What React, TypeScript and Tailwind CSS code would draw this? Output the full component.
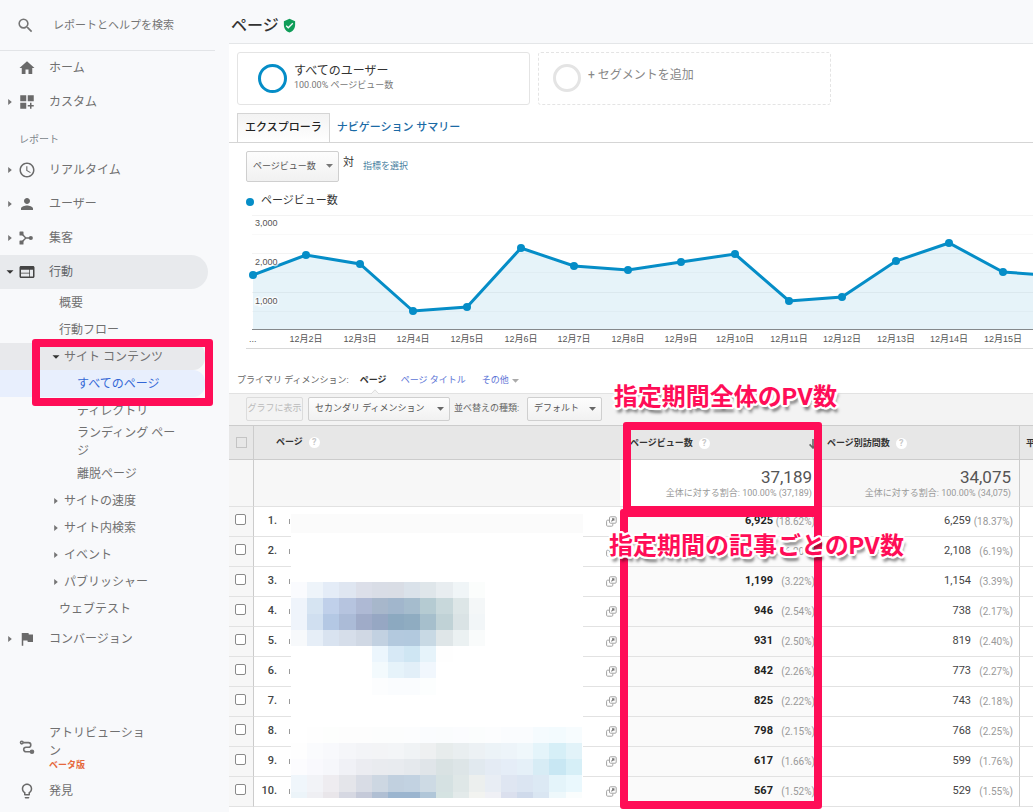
import React from "react";
import {
  MdSearch,
  MdHome,
  MdDashboardCustomize,
  MdAccessTime,
  MdPerson,
  MdWeb,
  MdFlag,
  MdLightbulbOutline,
  MdVerifiedUser,
} from "react-icons/md";

function AcquisitionIcon() {
  return (
    <svg viewBox="0 0 16 16" className="ml-px size-4" fill="currentColor">
      <rect x="0.5" y="1.5" width="4" height="4" rx="0.6" />
      <rect x="0.5" y="10.5" width="4" height="4" rx="0.6" />
      <circle cx="11.8" cy="8" r="2.1" />
      <path d="M2.5 3.5L6.8 8l-4.3 4.5M6.8 8h5" fill="none" stroke="currentColor" strokeWidth="1.4" />
    </svg>
  );
}

function AttributionIcon() {
  return (
    <svg viewBox="0 0 16 16" className="size-4" fill="none" stroke="currentColor" strokeWidth="1.6">
      <circle cx="2.8" cy="3.6" r="1.3" />
      <path d="M4.2 3.6h5.3a2.2 2.2 0 0 1 0 4.6H7a2.3 2.3 0 0 0 0 4.6h5" />
      <circle cx="13" cy="12.8" r="1.5" fill="currentColor" />
    </svg>
  );
}

function OpenIcon() {
  return (
    <svg viewBox="0 0 11 11" className="size-[11px]" fill="none" stroke="#a3a3a3" strokeWidth="1">
      <rect x="3.5" y="0.8" width="6.7" height="6.4" rx="1" />
      <path d="M3.2 4.2H1.6a1 1 0 0 0-1 1v4a1 1 0 0 0 1 1h4.2a1 1 0 0 0 1-1V7.6" />
      <path d="M5.4 5.4l2-2M6 2.9h1.9v1.9" stroke="#777" strokeWidth="1.1" />
    </svg>
  );
}

function Caret({ open = false }: { open?: boolean }) {
  return (
    <svg viewBox="0 0 8 8" className="size-2 shrink-0" fill={open ? "#333" : "#757575"}>
      <path d={open ? "M0.5 2.2h7L4 5.8z" : "M2.2 1v6L5.8 4z"} />
    </svg>
  );
}

function Down({ className = "" }: { className?: string }) {
  return (
    <svg viewBox="0 0 7 4" className={`h-1 w-[7px] ${className}`} fill="currentColor">
      <path d="M0 0h7L3.5 3.8z" />
    </svg>
  );
}

function Help() {
  return (
    <span className="inline-flex size-[11px] items-center justify-center rounded-full bg-white text-[9px] leading-none font-bold text-[#c8c8c8]">
      ?
    </span>
  );
}

function NavItem({
  icon,
  label,
  caret,
  active = false,
}: {
  icon: React.ReactNode;
  label: string;
  caret?: "open" | "closed";
  active?: boolean;
}) {
  return (
    <a
      href="#"
      className={`mr-[21px] flex h-[34px] items-center rounded-r-full pl-[6px] ${active ? "bg-[#e8eaed] text-[#5f6368]" : ""}`}
    >
      <span className="flex w-3">{caret && <Caret open={caret === "open"} />}</span>
      <span className="flex w-[31px] text-[18px] text-[#6a6a6a]">{icon}</span>
      {label}
    </a>
  );
}

function SubItem({ label, caret }: { label: string; caret?: boolean }) {
  return (
    <a href="#" className={`flex h-[27px] items-center ${caret ? "gap-1 pl-[52px]" : "pl-[59px]"}`}>
      {caret && <Caret />}
      {label}
    </a>
  );
}

function Sidebar() {
  return (
    <nav className="flex w-[229px] shrink-0 flex-col bg-[#f8f9fb] pb-1 text-[12px] text-[#707070]">
      <label className="mr-[14px] flex h-[51px] items-center border-b border-[#e2e4e7] pl-4">
        <MdSearch className="size-[19px] text-[#757575]" />
        <input
          type="search"
          aria-label="レポートとヘルプを検索"
          placeholder="レポートとヘルプを検索"
          className="ml-[18px] w-[140px] bg-transparent pt-[2px] text-[11px] outline-none placeholder:text-[#757575]"
        />
      </label>
      <NavItem icon={<MdHome />} label="ホーム" />
      <NavItem icon={<MdDashboardCustomize />} label="カスタム" caret="closed" />
      <h2 className="flex h-[34px] items-center pt-[6px] pl-[19px] text-[10px] text-[#80868b]">レポート</h2>
      <NavItem icon={<MdAccessTime />} label="リアルタイム" caret="closed" />
      <NavItem icon={<MdPerson />} label="ユーザー" caret="closed" />
      <NavItem icon={<AcquisitionIcon />} label="集客" caret="closed" />
      <NavItem icon={<MdWeb className="text-[#444]" />} label="行動" caret="open" active />
      <SubItem label="概要" />
      <SubItem label="行動フロー" />
      <div className="relative">
        <a href="#" className="mr-[24px] flex h-[27px] items-center gap-1 rounded-r-xl bg-[#e8e9ec] pl-[52px]">
          <Caret open />
          サイト コンテンツ
        </a>
        <a href="#" className="mr-[24px] flex h-[27px] items-center rounded-r-xl bg-[#e8effd] pl-[77px] text-[#3367d6]">
          すべてのページ
        </a>
        <div className="pointer-events-none absolute -top-1 left-8 h-[67px] w-[181px] rounded-[3px] border-8 border-[#ff0d57]" />
      </div>
      <a href="#" className="flex h-[27px] items-center pl-[77px]">
        ディレクトリ
      </a>
      <a href="#" className="ml-[77px] w-[104px] leading-[18px]">
        ランディング ページ
      </a>
      <a href="#" className="flex h-[27px] items-center pl-[77px]">
        離脱ページ
      </a>
      <SubItem label="サイトの速度" caret />
      <SubItem label="サイト内検索" caret />
      <SubItem label="イベント" caret />
      <SubItem label="パブリッシャー" caret />
      <SubItem label="ウェブテスト" />
      <NavItem icon={<MdFlag />} label="コンバージョン" caret="closed" />
      <a href="#" className="mt-auto mb-1 flex items-center pl-[19px]">
        <span className="w-[30px]">
          <AttributionIcon />
        </span>
        <span className="w-[100px] leading-[18px]">
          アトリビューション
          <span className="block text-[9px] leading-[10px] font-bold text-[#e5683c]">ベータ版</span>
        </span>
      </a>
      <NavItem icon={<MdLightbulbOutline />} label="発見" />
    </nav>
  );
}

const values: number[] = [60, 40, 49, 96, 92, 33, 51, 55, 47, 39, 86, 82, 46, 28, 57, 61, 52];
const xOf = (i: number) => Math.round(6.5 + i * 53.6);

function Chart() {
  const line = values.map((y, i) => `${xOf(i)},${y}`).join(" ");
  return (
    <svg className="h-[134px] w-full border-b border-[#d8d8d8]" role="img" aria-label="ページビュー数">
      {[0, 38, 77].map((y) => (
        <line key={y} x1="6" x2="3000" y1={y + 0.5} y2={y + 0.5} stroke="#f3f3f3" />
      ))}
      {[19, 57, 96].map((y) => (
        <line key={y} x1="6" x2="3000" y1={y + 0.5} y2={y + 0.5} stroke="#f9f9f9" />
      ))}
      <polygon points={`7,114 ${line} ${xOf(values.length - 1)},114`} fill="#058dc7" fillOpacity="0.1" />
      <line x1="6" x2="3000" y1="114.5" y2="114.5" stroke="#85898c" />
      <polyline points={line} fill="none" stroke="#058dc7" strokeWidth="3" />
      {values.map((y, i) => (
        <circle key={i} cx={xOf(i)} cy={y} r="4" fill="#058dc7" />
      ))}
      <g className="font-['Liberation_Sans','Noto_Sans_CJK_JP',sans-serif] text-[9px]" fill="#555">
        {["3,000", "2,000", "1,000"].map((t, i) => (
          <text key={t} x="9" y={11 + i * 39} stroke="#fff" strokeWidth="3" strokeOpacity="0.7" paintOrder="stroke">
            {t}
          </text>
        ))}
        <text x="3" y="127">
          ...
        </text>
        {values.slice(1, 15).map((_, i) => (
          <text key={i} x={xOf(i + 1)} y="127" textAnchor="middle">
            {`12月${i + 2}日`}
          </text>
        ))}
      </g>
    </svg>
  );
}

const mosaic: { x: number; y: number; h: number; c: string[] }[] = [
  { x: 0, y: 68, h: 16, c: ["#fafbfe", "#eef4fa", "#e4ecf7", "#dfe6f1", "#dcdfe9", "#d9dde6", "#d9dde5", "#dae2ea", "#dfe6ea", "#e8edf0", "#f0f5f7", "#fbfdfc"] },
  { x: 0, y: 84, h: 16, c: ["#eff4fb", "#d6e4f2", "#c0d0ea", "#b6c4df", "#aeb9d4", "#a7b7cb", "#a1b6cc", "#a5bccd", "#b5cbd2", "#c8d8db", "#dde6e7", "#f4f7f8"] },
  { x: 0, y: 100, h: 16, c: ["#eff4fb", "#d0dff0", "#b4c8e4", "#abbbd7", "#9fabc8", "#96a7c3", "#8ca9c0", "#8facc1", "#a6bfcc", "#c0d2d6", "#dae3e5", "#f2f6f8"] },
  { x: 0, y: 116, h: 16, c: ["#f7f9fb", "#e6eef7", "#d9e3f0", "#d6deea", "#d0d8e4", "#c2d1e1", "#b3c9de", "#b2c9de", "#c8d9e4", "#dfe6e8", "#ebf1f2", "#f9fbfb"] },
  { x: 5, y: 132, h: 16, c: ["#ecf6fd", "#d7e9f6", "#cfe6f3", "#e6f3fa", "#fefefe"] },
  { x: 5, y: 148, h: 16, c: ["#f3fafd", "#e6f3fa", "#e2eff8", "#f1f7fd"] },
  { x: 5, y: 164, h: 17, c: ["#fcfdfe", "#fafcfe", "#fafcfe", "#fcfefe"] },
  { x: 1, y: 213, h: 16, c: ["#fefefe", "#fdfefd", "#fdfdfd", "#fdfdfd", "#fcfdfd", "#fcfdfd", "#fcfdfe", "#fafcfe", "#fafcfd", "#fbfcfe", "#fbfdfd", "#fcfdfe", "#fafcfe", "#fafcfe", "#f5fbfe", "#f3fbfe", "#f7fcfe"] },
  { x: 0, y: 229, h: 16, c: ["#fefefe", "#fafbfd", "#f8f9fc", "#f5f6f9", "#f3f4f7", "#f3f4f6", "#f3f5f7", "#f0f3f5", "#eef0f1", "#e7ecec", "#e9eef0", "#ecf1f4", "#ecf3f7", "#edf4f9", "#eff7fb", "#e4f4fa", "#d6eff7", "#e2f3f9"] },
  { x: 0, y: 245, h: 16, c: ["#fcfcfe", "#f9f9fd", "#f6f7fb", "#f0f1f6", "#ebecf1", "#e9ebef", "#e8ebef", "#e5e9ed", "#e0e5e9", "#d9e2e3", "#dde5e7", "#e1e9ef", "#e4ebf4", "#e5edf7", "#e5f0f8", "#d7ecf5", "#c8e7f3", "#d6eff7"] },
  { x: 0, y: 261, h: 17, c: ["#f0f6fb", "#f2f3f7", "#eeecf0", "#e4e5ea", "#d8dce5", "#cdd7e2", "#c1d0df", "#c2d2e1", "#cddae4", "#d5e1e2", "#dfe7e7", "#ecefee", "#e8edf4", "#dfe6f2", "#dbe5f2", "#dce9f4", "#e4f4fa", "#eaf8fd"] },
  { x: 0, y: 278, h: 6, c: ["#ecf4f9", "#efeff3", "#e9e6ea", "#d6d8e2", "#c5cad9", "#b0bfd3", "#9bb5cf", "#9bb5cf", "#b0c6d8", "#d5e3e2", "#e3eaea", "#f2f3f0", "#eff0f5", "#dbe0ee", "#cfdaeb", "#dae6f2", "#eef8fb", "#fafdfd"] },
];

function Mosaic() {
  return (
    <svg
      viewBox="0 0 292 284"
      className="absolute top-[89px] left-[62px] h-[284px] w-[292px] bg-white"
      shapeRendering="crispEdges"
      aria-hidden="true"
    >
      <rect width="292" height="19" fill="#fbfbfb" />
      {mosaic.map((row) =>
        row.c.map((fill, i) => {
          const x = Math.round((row.x + i) * 16.15);
          const next = Math.round((row.x + i + 1) * 16.15);
          return <rect key={`${row.y}-${i}`} x={x} y={row.y} width={next - x} height={row.h} fill={fill} />;
        }),
      )}
    </svg>
  );
}

const rows: [string, string, string, string][] = [
  ["6,925", "(18.62%)", "6,259", "(18.37%)"],
  ["2,307", "(6.20%)", "2,108", "(6.19%)"],
  ["1,199", "(3.22%)", "1,154", "(3.39%)"],
  ["946", "(2.54%)", "738", "(2.17%)"],
  ["931", "(2.50%)", "819", "(2.40%)"],
  ["842", "(2.26%)", "773", "(2.27%)"],
  ["825", "(2.22%)", "743", "(2.18%)"],
  ["798", "(2.15%)", "768", "(2.25%)"],
  ["617", "(1.66%)", "599", "(1.76%)"],
  ["567", "(1.52%)", "529", "(1.55%)"],
];

function Metric({ value, share, bold = false }: { value: string; share: string; bold?: boolean }) {
  return (
    <div className="flex items-center justify-end">
      <span className={bold ? "font-bold text-[#222]" : "text-[#444]"}>{value}</span>
      <span className="w-[42px] text-right text-[10px] text-[#999]">{share}</span>
    </div>
  );
}

function Total({ value }: { value: string }) {
  return (
    <>
      <div className="text-[17px] leading-[18px] text-[#555]">{value}</div>
      <div className="text-[9px] leading-[14px] whitespace-nowrap text-[#999]">全体に対する割合: 100.00% ({value})</div>
    </>
  );
}

const noteClass =
  "pointer-events-none absolute text-[24px] leading-[30px] font-bold whitespace-nowrap text-[#ff0d57] [text-shadow:2px_0_0_#fff,-2px_0_0_#fff,0_2px_0_#fff,0_-2px_0_#fff,2px_1px_0_#fff,2px_-1px_0_#fff,-2px_1px_0_#fff,-2px_-1px_0_#fff,1px_2px_0_#fff,-1px_2px_0_#fff,1px_-2px_0_#fff,-1px_-2px_0_#fff,3px_0_1px_#fff,-3px_0_1px_#fff,2px_5px_3px_rgba(0,0,0,0.5)]";

function DataTable() {
  return (
    <div className="relative">
      <table className="w-full table-fixed border-separate border-spacing-0 text-[11px]">
        <colgroup>
          <col className="w-[25px]" />
          <col />
          <col className="w-[199px]" />
          <col className="w-[201px]" />
          <col className="w-[13px]" />
        </colgroup>
        <thead className="bg-[#e7e7e7] text-left text-[9px] text-[#333]">
          <tr>
            <th className="h-[35px] border-y border-r border-[#ccc] p-0">
              <input
                type="checkbox"
                aria-label="すべて選択"
                className="ml-[7px] block size-[11px] appearance-none border border-[#c4c4c4] bg-[#e7e7e7]"
              />
            </th>
            <th className="border-y border-[#ccc] py-0 pr-0 pl-[22px]">
              <span className="flex items-center gap-[6px]">
                ページ <Help />
              </span>
            </th>
            <th className="border-y border-[#ccc] py-0 pr-[2px] pl-[10px]">
              <span className="flex items-center gap-[6px] pt-[2px]">
                ページビュー数 <Help />
                <svg viewBox="0 0 8 10" className="ml-auto h-[10px] w-2" fill="none" stroke="#666" strokeWidth="1.6">
                  <path d="M4 0v9M0.6 5.4L4 9l3.4-3.6" />
                </svg>
              </span>
            </th>
            <th className="border-y border-r border-[#ccc] py-0 pr-0 pl-2">
              <span className="flex items-center gap-[6px] pt-[2px]">
                ページ別訪問数 <Help />
              </span>
            </th>
            <th className="overflow-hidden border-y border-[#ccc] pt-[2px] pr-0 pb-0 pl-[6px] whitespace-nowrap">平</th>
          </tr>
        </thead>
        <tbody>
          <tr className="bg-[#f7f7f7] text-right">
            <td className="h-[47px] border-r border-b border-r-[#ccc] border-b-[#e2e2e2] p-0" />
            <td className="border-b border-[#e2e2e2] p-0" />
            <td className="border-b border-[#e2e2e2] bg-white pt-[2px] pr-[7px] pb-0 pl-0">
              <Total value="37,189" />
            </td>
            <td className="border-r border-b border-r-[#ccc] border-b-[#e2e2e2] pt-[2px] pr-2 pb-0 pl-0">
              <Total value="34,075" />
            </td>
            <td className="border-b border-[#e2e2e2] p-0" />
          </tr>
          {rows.map(([pv, pvShare, visits, visitShare], i) => (
            <tr key={pv}>
              <td className="h-[30px] border-r border-b border-r-[#ccc] border-b-[#e2e2e2] bg-[#f7f7f7] px-0 pt-0 pb-1">
                <input
                  type="checkbox"
                  aria-label={`${i + 1} 行目を選択`}
                  className="ml-[6px] block size-[11px] appearance-none rounded-[2px] border border-[#8a8a8a] bg-white"
                />
              </td>
              <td className="border-b border-[#e2e2e2] py-0 pr-[3px] pl-0 text-[#444]">
                <div className="flex items-center">
                  <span className="w-[23px] text-right font-medium">{i + 1}.</span>
                  <span className="ml-3 h-[5px] w-px bg-[#999]" />
                  <span className="ml-auto">
                    <OpenIcon />
                  </span>
                </div>
              </td>
              <td className="border-b border-[#e2e2e2] bg-[#fafafa] py-0 pr-1 pl-0">
                <Metric value={pv} share={pvShare} bold />
              </td>
              <td className="border-r border-b border-r-[#ccc] border-b-[#e2e2e2] py-0 pr-[6px] pl-0">
                <Metric value={visits} share={visitShare} />
              </td>
              <td className="border-b border-[#e2e2e2] p-0" />
            </tr>
          ))}
        </tbody>
      </table>
      <Mosaic />
      <div className="pointer-events-none absolute top-[84px] right-[211px] h-[300px] w-[202px] rounded-[3px] border-8 border-[#ff0d57]" />
      <div className="pointer-events-none absolute -top-[3px] right-[211px] h-[92px] w-[199px] rounded-[3px] border-8 border-[#ff0d57]" />
      <p className={`${noteClass} -top-[43px] right-[196px]`}>指定期間全体のPV数</p>
      <p className={`${noteClass} top-[106px] right-[129px]`}>指定期間の記事ごとのPV数</p>
    </div>
  );
}

const boxClass =
  "appearance-none rounded-[2px] border border-[#cfcfcf] bg-linear-to-b from-[#fdfdfd] to-[#f1f1f1] text-[9px] text-[#555]";

export default function App() {
  return (
    <div className="flex min-h-screen bg-white font-['Roboto','Noto_Sans_CJK_JP',sans-serif]">
      <Sidebar />
      <main className="min-w-0 flex-1 overflow-hidden">
        <header className="flex h-11 items-center gap-[3px] border-b border-[#e4e6e8] bg-[#f8f9fb] pt-2 pl-[2px]">
          <h1 className="text-[16px] font-medium text-[#333]">ページ</h1>
          <MdVerifiedUser className="size-[15px] text-[#0f9d58]" />
        </header>

        <section className="flex gap-2 pt-2 pl-2 text-left">
          <button className="flex h-[53px] w-[293px] items-center gap-[7px] rounded-[3px] border border-[#e4e4e4] pb-px pl-5">
            <span className="size-[29px] rounded-full border-3 border-[#058dc7]" />
            <span>
              <span className="block text-left text-[12px] leading-[15px] text-[#333]">すべてのユーザー</span>
              <span className="block text-left text-[9px] leading-[13px] text-[#777]">100.00% ページビュー数</span>
            </span>
          </button>
          <button className="flex h-[53px] w-[293px] items-center gap-[7px] rounded-[3px] border border-dashed border-[#e4e4e4] pb-px pl-[14px]">
            <span className="size-[28px] rounded-full border-3 border-[#e4e4e4]" />
            <span className="pb-[6px] text-[12px] text-[#888]">+ セグメントを追加</span>
          </button>
        </section>

        <div className="mt-2 flex h-[30px] border-b border-[#d5d5d5] pl-2 text-[11px] font-medium">
          <button className="border border-b-0 border-[#d5d5d5] bg-linear-to-b from-[#f3f3f3] to-white px-[7px] text-[#222]">
            エクスプローラ
          </button>
          <button className="px-[7px] pt-px text-[#1b6aa5]">ナビゲーション サマリー</button>
        </div>

        <section className="pt-2 pl-[17px]">
          <div className="flex h-[31px] items-center">
            <div className="relative text-[#777]">
              <select aria-label="指標" className={`${boxClass} h-[31px] w-[93px] pl-[6px]`}>
                <option>ページビュー数</option>
              </select>
              <Down className="pointer-events-none absolute top-[13px] right-[6px]" />
            </div>
            <span className="pb-[6px] pl-1 text-[11px] text-[#333]">対</span>
            <a href="#" className="pl-[9px] text-[9px] text-[#4a7f9f]">
              指標を選択
            </a>
          </div>
          <div className="flex h-[33px] items-center gap-[7px] pt-[6px] text-[11px] text-[#333]">
            <span className="size-2 rounded-full bg-[#058dc7]" />
            ページビュー数
          </div>
          <Chart />
        </section>

        <div className="mt-5 flex h-6 items-center pl-2 text-[9px] text-[#666]">
          プライマリ ディメンション:
          <span className="relative flex h-6 items-center pl-[11px] font-bold text-[#333]">
            ページ
            <svg viewBox="0 0 8 5" className="absolute -bottom-px left-[22px] h-[5px] w-2" fill="#f3f3f3" stroke="#dcdcdc">
              <path d="M0 5L4 0.8 8 5" />
            </svg>
          </span>
          <a href="#" className="ml-[14px] text-[#5b74d6]">
            ページ タイトル
          </a>
          <button className="ml-4 flex items-center gap-[3px] text-[#5b74d6]">
            その他 <Down className="text-[#aaa]" />
          </button>
        </div>

        <div className="flex h-8 items-center border-t border-[#e2e2e2] bg-[#f3f3f3] pb-[2px] pl-[17px] text-[9px] text-[#666]">
          <button
            disabled
            className="h-6 w-[57px] overflow-hidden rounded-[2px] border border-[#dcdcdc] whitespace-nowrap text-[#bbb]"
          >
            グラフに表示
          </button>
          <div className="relative ml-[5px]">
            <select aria-label="セカンダリ ディメンション" className={`${boxClass} h-6 w-[142px] pl-[6px]`}>
              <option>セカンダリ ディメンション</option>
            </select>
            <Down className="pointer-events-none absolute top-[10px] right-[6px]" />
          </div>
          <label htmlFor="sort" className="w-[77px] pl-1">
            並べ替えの種類:
          </label>
          <div className="relative">
            <select id="sort" className={`${boxClass} h-6 w-[75px] pl-[6px]`}>
              <option>デフォルト</option>
            </select>
            <Down className="pointer-events-none absolute top-[10px] right-[6px]" />
          </div>
        </div>

        <DataTable />
      </main>
    </div>
  );
}
